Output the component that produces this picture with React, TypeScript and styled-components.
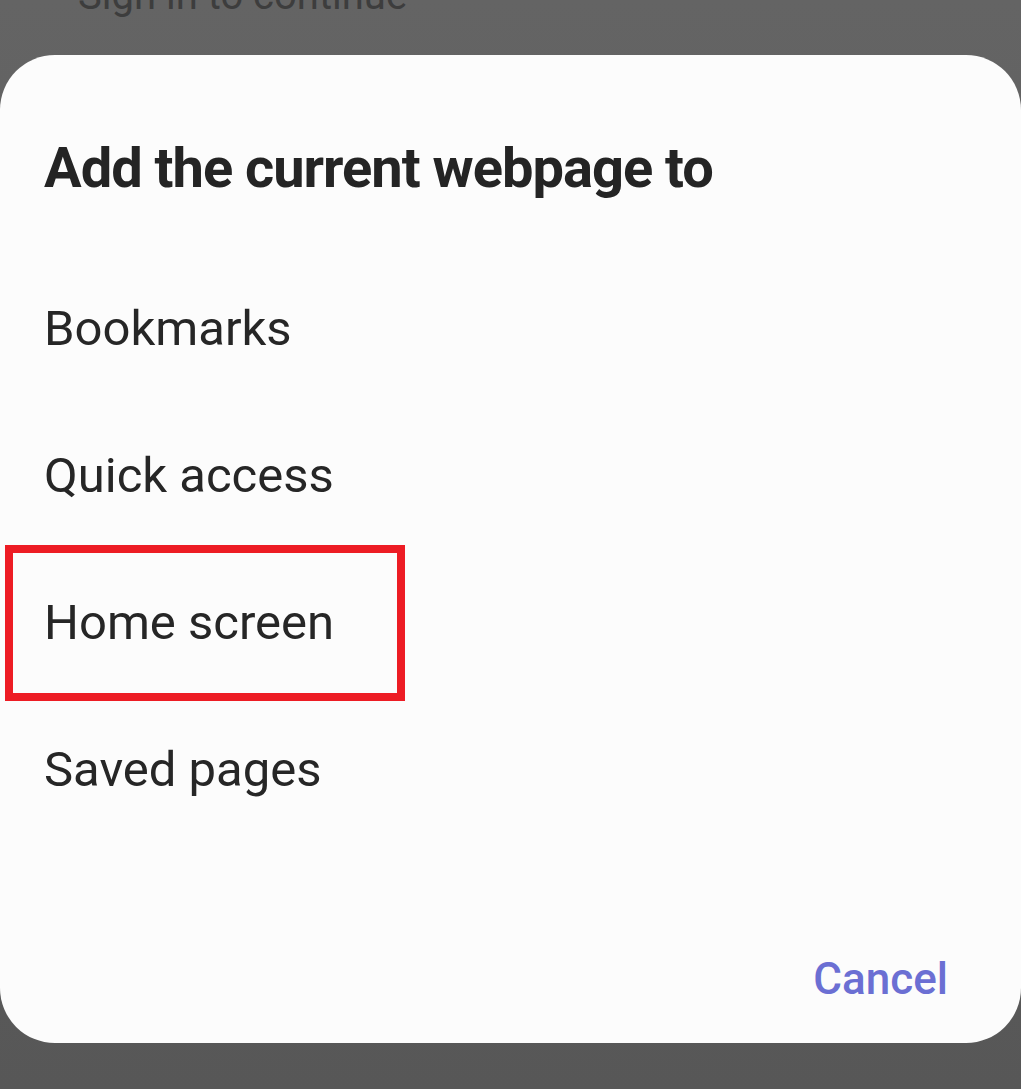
import React from "react";
import styled, { createGlobalStyle } from "styled-components";

const Global = createGlobalStyle`
  html, body { margin: 0; padding: 0; }
  body { font-family: Roboto, "Noto Sans", sans-serif; background: #5a5a5a; }
`;

const Screen = styled.div`
  width: 1021px;
  height: 1089px;
  overflow: hidden;
  display: flex;
  flex-direction: column;
  background: linear-gradient(180deg, #646464 0%, #5f5f5f 40%, #575757 100%);
`;

const Backdrop = styled.div`
  height: 55px;
  flex: none;
  overflow: hidden;
  padding-left: 78px;
`;

const BackdropText = styled.div`
  margin-top: -24px;
  font-size: 40px;
  line-height: 40px;
  color: #3d3d3d;
`;

const Sheet = styled.div`
  flex: none;
  height: 988px;
  box-sizing: border-box;
  background: #fcfcfc;
  border-radius: 55px;
  padding: 85px 0 42px 44px;
  display: flex;
  flex-direction: column;
`;

const Title = styled.h1`
  margin: 0 0 59px 0;
  font-size: 56px;
  line-height: 56px;
  font-weight: 700;
  color: #242424;
  letter-spacing: -1px;
`;

const List = styled.div`
  display: flex;
  flex-direction: column;
`;

const Item = styled.div<{ $marked?: boolean }>`
  position: relative;
  height: 147px;
  line-height: 147px;
  font-size: 49px;
  color: #262626;
  ${(p) =>
    p.$marked &&
    `
    &::after {
      content: "";
      position: absolute;
      left: -39px;
      top: -4px;
      width: 400px;
      height: 156px;
      box-sizing: border-box;
      border: 8px solid #ed1c24;
    }
  `}
`;

const Footer = styled.div`
  margin-top: auto;
  display: flex;
  justify-content: flex-end;
  padding-right: 73px;
`;

const CancelButton = styled.div`
  font-size: 44px;
  line-height: 44px;
  font-weight: 500;
  color: #6b6fd3;
`;

const items = ["Bookmarks", "Quick access", "Home screen", "Saved pages"];

export default function App() {
  return (
    <>
      <Global />
      <Screen>
        <Backdrop>
          <BackdropText>Sign in to continue</BackdropText>
        </Backdrop>
        <Sheet>
          <Title>Add the current webpage to</Title>
          <List>
            {items.map((t) => (
              <Item key={t} $marked={t === "Home screen"}>
                {t}
              </Item>
            ))}
          </List>
          <Footer>
            <CancelButton>Cancel</CancelButton>
          </Footer>
        </Sheet>
      </Screen>
    </>
  );
}
